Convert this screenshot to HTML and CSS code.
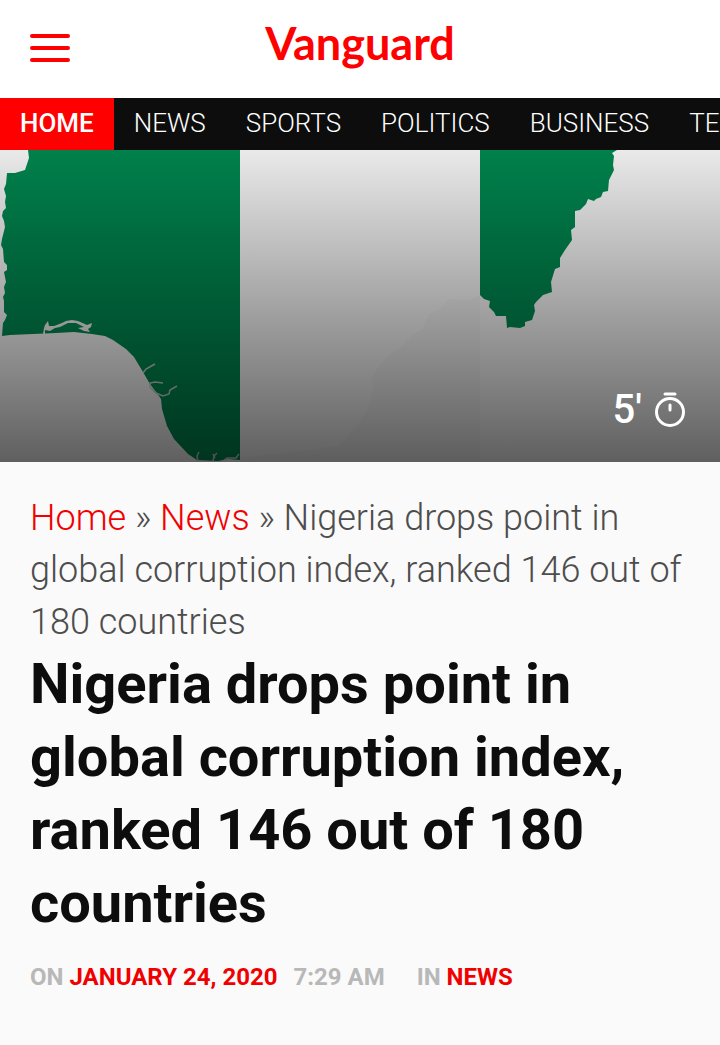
FILE: index.html
```html
<!DOCTYPE html>
<html lang="en">
<head>
  <meta charset="UTF-8">
  <meta name="viewport" content="width=device-width, initial-scale=1.0">
  <title>Nigeria drops point in global corruption index - Vanguard</title>
  <link rel="stylesheet" href="styles.css">
</head>
<body>
  <header class="header">
    <button class="menu-btn" aria-label="Menu">
      <span></span>
      <span></span>
      <span></span>
    </button>
    <a class="logo" href="#">Vanguard</a>
  </header>

  <nav class="nav">
    <a class="active" href="#">Home</a>
    <a href="#">News</a>
    <a href="#">Sports</a>
    <a href="#">Politics</a>
    <a href="#">Business</a>
    <a href="#">Technology</a>
  </nav>

  <main>
    <div class="hero">
      <svg class="hero-map" viewBox="0 0 720 312" role="img" aria-label="Map of Nigeria in flag colours">
        <defs>
          <linearGradient id="shade" x1="0" y1="0" x2="0" y2="1">
            <stop offset="0" stop-color="#000" stop-opacity="0.07"/>
            <stop offset="0.5" stop-color="#000" stop-opacity="0.35"/>
            <stop offset="1" stop-color="#000" stop-opacity="0.62"/>
          </linearGradient>
        </defs>
        <rect width="720" height="312" fill="#fbfbfb"/>
        <!-- middle white band -->
        <path fill="#f6f6f6" d="M240 312V308L300 301L338 296L345 288L358 275L368 258L374 236L371 230L376 220L390 204L400 198L410 187L423 178L428 165L438 160L450 149L468 150L480 145V312Z"/>
        <!-- west -->
        <path fill="#008a51" d="M28 0H240V310L228 309L218 311L197 310L188 304L174 289L167 276L162 259L161 249L159 246L150 234L143 222L134 207L126 199L113 190L105 186L92 184L74 182L56 183L10 185L2 186L3 173L5 170L7 165L4 162L4 151L3 147L5 143L4 137L6 132L4 122L7 120L7 115L4 112L3 99L1 95L2 89L5 77L4 71L2 66L3 61L6 58L5 52L6 46L4 39L6 34L7 23L15 23L25 20L29 8Z"/>
        <!-- east -->
        <path fill="#008a51" d="M480 0H617L612 3L614 6L613 15L614 20L609 30L608 41L603 42L601 47L596 49L594 51L588 49L586 54L580 60L575 61L575 77L571 80L572 90L565 100L560 108L560 117L555 119L551 132L552 142L543 145L536 152L534 155L535 161L532 170L525 172L525 176L520 178L510 177L507 178L506 166L496 166L494 162L489 157L490 151L484 149L480 145Z"/>
        <!-- lagoon and creeks -->
        <path fill="#f5f5f5" d="M43 184L44 178L45 175L48 171L49 176L54 176L62 173L66 171L72 170L78 171L87 175L92 173L91 177L88 179L90 182L84 181L78 178L84 177L76 173L68 173L60 177L55 178L50 181L45 180L45 185Z"/>
        <path class="creek" d="M143 223L146 219L155 214M163 233L155 232L150 233L150 237L156 243L163 246L169 244L170 240L177 236M198 311L197 306L199 302M213 311L214 306L217 303M215 308L213 304M224 310L227 308L236 308L239 304"/>
        <rect width="720" height="312" fill="url(#shade)"/>
      </svg>
      <div class="read-time">
        <span>5'</span>
        <svg viewBox="0 0 32 36" width="32" height="36" fill="none" stroke="#fff" stroke-width="3" aria-hidden="true">
          <circle cx="16" cy="20" r="13.5"/>
          <path stroke-linecap="round" d="M11 2H21"/>
          <path stroke-linecap="round" d="M16 13V18"/>
        </svg>
      </div>
    </div>

    <article class="post">
      <p class="breadcrumb">
        <a href="#">Home</a> » <a href="#">News</a> » Nigeria drops point in global corruption index, ranked 146 out of 180 countries
      </p>
      <h1>Nigeria drops point in global corruption index, ranked 146 out of 180 countries</h1>
      <div class="meta">
        <span>On <a href="#">January 24, 2020</a></span>
        <time class="time">7:29 am</time>
        <span>In <a href="#">News</a></span>
      </div>
    </article>
  </main>
</body>
</html>
```
FILE: styles.css
```css
* {
  box-sizing: border-box;
}

body {
  margin: 0;
  background: #fafafa;
  color: #0d0d0d;
  font-family: Roboto, sans-serif;
}

a {
  color: #f00000;
  text-decoration: none;
}

.header {
  display: grid;
  grid-template-columns: 40px 1fr 40px;
  align-items: center;
  height: 98px;
  padding: 0 30px 2px;
  background: #fff;
}

.menu-btn {
  display: flex;
  flex-direction: column;
  gap: 8px;
  padding: 0;
  border: none;
  background: none;
  cursor: pointer;
}

.menu-btn span {
  width: 40px;
  height: 4px;
  border-radius: 2px;
  background: #f00;
}

.logo {
  padding-bottom: 10px;
  color: #f00;
  font-family: Lato, sans-serif;
  font-size: 45px;
  font-weight: 700;
  line-height: 60px;
  text-align: center;
}

.nav {
  display: flex;
  overflow: hidden;
  background: #0d0d0d;
}

.nav a {
  padding: 0 20px 2px;
  color: #fff;
  font-size: 26px;
  font-weight: 300;
  line-height: 50px;
  text-transform: uppercase;
}

.nav .active {
  background: #f00;
  font-weight: 500;
}

.hero {
  position: relative;
}

.hero-map {
  display: block;
  width: 100%;
}

.creek {
  fill: none;
  stroke: #c5d5cd;
  stroke-width: 1.5;
}

.read-time {
  position: absolute;
  right: 34px;
  bottom: 28px;
  display: flex;
  align-items: center;
  gap: 12px;
  color: #fff;
  font-size: 40px;
  font-weight: 500;
  line-height: 48px;
}

.post {
  padding: 30px;
}

.breadcrumb {
  margin: 0;
  color: #4d4d4d;
  font-size: 36px;
  font-weight: 300;
  line-height: 52px;
}

h1 {
  margin: 0;
  font-size: 56px;
  font-weight: 700;
  line-height: 73px;
}

.meta {
  display: flex;
  margin-top: 20px;
  color: #b8b8b8;
  font-size: 24px;
  font-weight: 700;
  line-height: 34px;
  text-transform: uppercase;
}

.time {
  margin: 0 32px 0 16px;
}
```
